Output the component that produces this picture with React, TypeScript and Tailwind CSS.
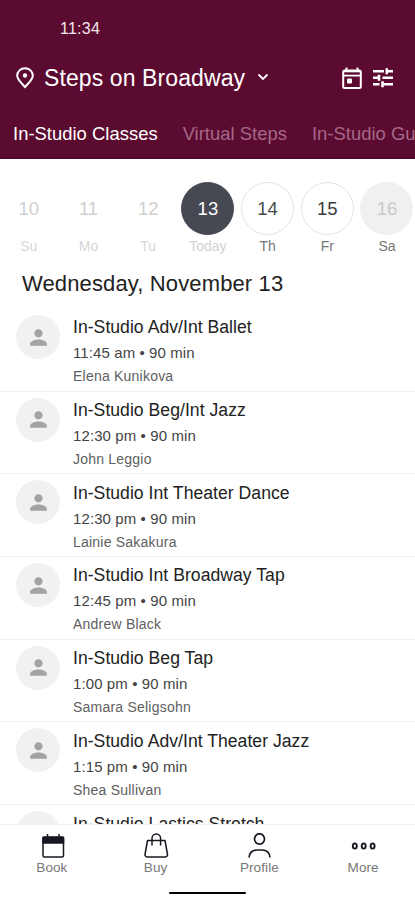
import { MdPerson } from 'react-icons/md';

const days = [
  { date: 10, label: 'Su', circle: 'border-transparent text-[#cfcfcf]', text: 'text-[#d6d6d6]' },
  { date: 11, label: 'Mo', circle: 'border-transparent text-[#cfcfcf]', text: 'text-[#d6d6d6]' },
  { date: 12, label: 'Tu', circle: 'border-transparent text-[#cfcfcf]', text: 'text-[#d6d6d6]' },
  { date: 13, label: 'Today', circle: 'border-[#464852] bg-[#464852] text-white', text: 'text-[#d2d2d2]' },
  { date: 14, label: 'Th', circle: 'border-[#e3e3e3] text-[#4a4a4a]', text: 'text-[#777777]' },
  { date: 15, label: 'Fr', circle: 'border-[#e3e3e3] text-[#3a3a3a]', text: 'text-[#777777]' },
  { date: 16, label: 'Sa', circle: 'border-[#f0f0f0] bg-[#f0f0f0] text-[#cacaca]', text: 'text-[#777777]' },
];

const classes = [
  { name: 'In-Studio Adv/Int Ballet', time: '11:45 am • 90 min', teacher: 'Elena Kunikova' },
  { name: 'In-Studio Beg/Int Jazz', time: '12:30 pm • 90 min', teacher: 'John Leggio' },
  { name: 'In-Studio Int Theater Dance', time: '12:30 pm • 90 min', teacher: 'Lainie Sakakura' },
  { name: 'In-Studio Int Broadway Tap', time: '12:45 pm • 90 min', teacher: 'Andrew Black' },
  { name: 'In-Studio Beg Tap', time: '1:00 pm • 90 min', teacher: 'Samara Seligsohn' },
  { name: 'In-Studio Adv/Int Theater Jazz', time: '1:15 pm • 90 min', teacher: 'Shea Sullivan' },
  { name: 'In-Studio Lastics Stretch' },
];

function PinIcon() {
  return (
    <svg width="18" height="22" viewBox="0 0 18 22" fill="none" stroke="currentColor" strokeWidth="2">
      <path d="M9 20C5.5 16 1.2 12.5 1.2 8.7a7.8 7.5 0 0 1 15.6 0C16.8 12.5 12.5 16 9 20z" />
      <circle cx="9" cy="8.5" r="2.2" fill="currentColor" stroke="none" />
    </svg>
  );
}

function CalendarIcon() {
  return (
    <svg width="20" height="23" viewBox="0 0 20 23" fill="none" stroke="currentColor" strokeWidth="2">
      <rect x="1.2" y="3.5" width="17.6" height="17.5" rx="1.5" />
      <path d="M1.5 4.2h17" strokeWidth="2.2" />
      <path d="M1.5 8.6h17" strokeWidth="1.8" />
      <path d="M4.5 0.5v4M15.5 0.5v4" />
      <rect x="5" y="11.5" width="5" height="5" rx="1" fill="currentColor" stroke="none" />
    </svg>
  );
}

function FilterIcon() {
  return (
    <svg width="20" height="20" viewBox="0 0 20 20" fill="none" stroke="currentColor" strokeWidth="2.6">
      <path d="M0 3.2h11M13 3.2h7M0 9.7h6M9.5 9.7H20M0 16.2h6.5M9.5 16.2H20" />
      <path d="M13.8 0.2v6M6 6.7v6M9.5 13.2v6" />
    </svg>
  );
}

function BookIcon() {
  return (
    <svg width="26" height="26" viewBox="0 0 26 26" fill="none" stroke="currentColor" strokeWidth="1.5">
      <rect x="4" y="4" width="20.5" height="20" rx="1.5" />
      <path d="M4 4.5h20.5V10H4z" fill="currentColor" />
      <path d="M8.5 1v4M20 1v4" />
    </svg>
  );
}

function BuyIcon() {
  return (
    <svg width="26" height="26" viewBox="0 0 26 26" fill="none" stroke="currentColor" strokeWidth="1.5">
      <path d="M4.5 7.5H22l2.5 14a2.3 2.3 0 0 1-2.3 2.5H4.3A2.3 2.3 0 0 1 2 21.5z" strokeLinejoin="round" />
      <path d="M9 12.5v-7a4.3 4.5 0 0 1 8.6 0v7" />
    </svg>
  );
}

function ProfileIcon() {
  return (
    <svg width="26" height="26" viewBox="0 0 26 26" fill="none" stroke="currentColor" strokeWidth="1.7">
      <ellipse cx="13.5" cy="6" rx="5" ry="5.2" />
      <path d="M3 24.5c.5-5 3.5-7.5 8-7.5h5c4.500 0 7.500 2.500 8 7.500" />
    </svg>
  );
}

function MoreIcon() {
  return (
    <svg width="26" height="26" viewBox="0 0 26 26" fill="none" stroke="currentColor" strokeWidth="1.9">
      <ellipse cx="4.8" cy="13" rx="2" ry="2.6" />
      <ellipse cx="13.7" cy="13" rx="2" ry="2.6" />
      <ellipse cx="22.6" cy="13" rx="2" ry="2.6" />
    </svg>
  );
}

const navItems = [
  { label: 'Book', icon: BookIcon },
  { label: 'Buy', icon: BuyIcon },
  { label: 'Profile', icon: ProfileIcon },
  { label: 'More', icon: MoreIcon },
];

export default function App() {
  return (
    <div className="flex flex-col w-[415px] h-[900px] overflow-hidden bg-white font-['Liberation_Sans',Arial,sans-serif]">
      <header className="h-[159px] shrink-0 bg-[#5c0b30] text-white border-b border-[#4a0824] overflow-hidden">
        <p className="pt-[19px] pl-[60px] text-base leading-5 tracking-[0.25px] text-[#f3e8ed]">11:34</p>
        <div className="flex items-center h-8 mt-[23px] pl-4 pr-[22px]">
          <PinIcon />
          <h1 className="ml-2.5 text-[23px] leading-8 tracking-[0.1px] whitespace-nowrap">Steps on Broadway</h1>
          <svg className="ml-3 -mt-0.5" width="12" height="8" viewBox="0 0 12 8" fill="none" stroke="currentColor" strokeWidth="1.8">
            <path d="M1.5 1.5L6 6l4.5-4.5" />
          </svg>
          <div className="flex items-center gap-[11px] ml-auto">
            <CalendarIcon />
            <FilterIcon />
          </div>
        </div>
        <nav className="flex gap-[25px] mt-7 pl-[13px] text-[18.4px] leading-6 tracking-[0.03px] whitespace-nowrap text-[#a4688a]">
          <span className="text-white">In-Studio Classes</span>
          <span>Virtual Steps</span>
          <span>In-Studio Guest</span>
        </nav>
      </header>

      <section className="flex shrink-0 gap-2 pt-[23px] pl-[3px] h-[99px]">
        {days.map((day) => (
          <div key={day.date} className="flex flex-col items-center w-[51.7px] shrink-0">
            <div className={`flex items-center justify-center size-[53px] shrink-0 rounded-full border text-[18.5px] ${day.circle}`}>
              {day.date}
            </div>
            <span className={`mt-px text-sm leading-5 ${day.text}`}>{day.label}</span>
          </div>
        ))}
      </section>

      <h2 className="h-[51px] shrink-0 pt-3 pl-[22px] text-[22px] leading-7 tracking-[0.13px] text-[#222222]">
        Wednesday, November 13
      </h2>

      <ul className="flex-1 min-h-0 overflow-hidden">
        {classes.map((item) => (
          <li key={item.name} className="flex h-[82.7px] pl-4 pt-1.5 border-b border-[#f1f1f1]">
            <div className="flex items-center justify-center size-11 shrink-0 rounded-full bg-[#f1f1f1] text-[#a3a3a3]">
              <MdPerson size={25} />
            </div>
            <div className="ml-[13px] pt-[0.4px] whitespace-nowrap">
              <h3 className="text-[17.6px] leading-6 tracking-[0.03px] text-[#222222]">{item.name}</h3>
              {item.time && <p className="mt-0.5 text-[15px] leading-6 tracking-[0.1px] text-[#444444]">{item.time}</p>}
              {item.teacher && (
                <p className="text-[14px] leading-[22px] tracking-[0.22px] text-[#606060]">{item.teacher}</p>
              )}
            </div>
          </li>
        ))}
      </ul>

      <footer className="h-[76px] shrink-0 border-t border-[#f2f2f2] bg-white">
        <div className="grid grid-cols-4 pt-2">
          {navItems.map((item) => (
            <div key={item.label} className="flex flex-col items-center text-[#171722]">
              <item.icon />
              <span className="text-[13.5px] leading-[18px] tracking-[0.1px] text-[#777777]">{item.label}</span>
            </div>
          ))}
        </div>
        <div className="w-[77px] h-0.5 mx-auto mt-[15px] rounded-full bg-black" />
      </footer>
    </div>
  );
}
